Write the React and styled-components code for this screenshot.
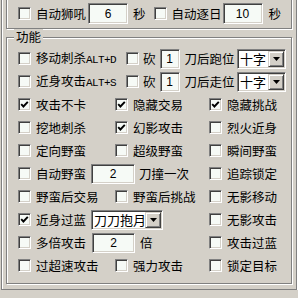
import React from "react";
import styled, { createGlobalStyle } from "styled-components";

const Global = createGlobalStyle`
  html, body {
    margin: 0;
    padding: 0;
    background: #d4d0c8;
    overflow: hidden;
  }
  body {
    font-family: "Noto Sans CJK SC", "DejaVu Sans", sans-serif;
    font-size: 12.5px;
    color: #000;
  }
`;

const Frame = styled.div`
  box-sizing: border-box;
  width: 296px;
  margin: -21px 0 0 1px;
  padding: 0 4px 5px 4px;
  border: 1px solid #808080;
  box-shadow: inset 1px 1px #fff, 1px 1px #fff;
`;

const Group = styled.div`
  position: relative;
  box-sizing: border-box;
  border: 1px solid #808080;
  box-shadow: inset 1px 1px #fff, 1px 1px #fff;
  margin-top: ${(p) => p.$mt || 0}px;
  padding: ${(p) => p.$pad};
`;

const Title = styled.span`
  position: absolute;
  top: -9px;
  left: 7px;
  padding: 0 2px;
  background: #d4d0c8;
  line-height: 16px;
`;

const FlexRow = styled.div`
  display: flex;
  align-items: center;
  height: ${(p) => p.$h || 23}px;
`;

const GridRow = styled.div`
  display: grid;
  grid-template-columns: 97px 94px 1fr;
  align-items: center;
  height: 23px;
`;

const Span2 = styled.div`
  grid-column: span 2;
  display: flex;
  align-items: center;
`;

const Item = styled.label`
  display: flex;
  align-items: center;
  gap: 5px;
  white-space: nowrap;
  flex-shrink: 0;
  width: ${(p) => (p.$w ? `${p.$w}px` : "auto")};
  margin-left: ${(p) => p.$ml || 0}px;
  line-height: 16px;
`;

const Box = styled.span`
  box-sizing: border-box;
  width: 13px;
  height: 13px;
  flex-shrink: 0;
  display: flex;
  align-items: center;
  justify-content: center;
  background: #f6faf6;
  border: 1px solid;
  border-color: #808080 #fff #fff #808080;
  box-shadow: inset 1px 1px #404040, inset -1px -1px #d4d0c8;
`;

const Mono = styled.span`
  font-family: "Liberation Mono", monospace;
  font-size: 11px;
  letter-spacing: -0.6px;
`;

const Text = styled.span`
  flex-shrink: 0;
  white-space: nowrap;
  margin-left: ${(p) => p.$ml || 0}px;
  line-height: 16px;
`;

const Field = styled.div`
  box-sizing: border-box;
  flex-shrink: 0;
  width: ${(p) => p.$w}px;
  height: ${(p) => p.$h || 20}px;
  margin-left: ${(p) => p.$ml || 0}px;
  display: flex;
  align-items: center;
  justify-content: center;
  background: #f6faf6;
  border: 1px solid;
  border-color: #808080 #fff #fff #808080;
  box-shadow: inset 1px 1px #404040, inset -1px -1px #d4d0c8;
  font-family: "Liberation Sans", Arial, sans-serif;
  font-size: 12px;
`;

const SelectBox = styled.div`
  box-sizing: border-box;
  flex-shrink: 0;
  width: ${(p) => p.$w}px;
  height: 20px;
  margin-left: ${(p) => (p.$auto ? "auto" : `${p.$ml || 0}px`)};
  display: flex;
  align-items: stretch;
  padding: 1px;
  background: #fff;
  border: 1px solid;
  border-color: #808080 #fff #fff #808080;
  box-shadow: inset 1px 1px #404040, inset -1px -1px #d4d0c8;
`;

const SelectText = styled.span`
  flex: 1;
  overflow: hidden;
  white-space: nowrap;
  padding-left: 1px;
  line-height: 16px;
  font-size: 13px;
`;

const DropBtn = styled.span`
  box-sizing: border-box;
  width: 16px;
  flex-shrink: 0;
  display: flex;
  align-items: center;
  justify-content: center;
  background: #d4d0c8;
  border: 1px solid;
  border-color: #d4d0c8 #404040 #404040 #d4d0c8;
  box-shadow: inset 1px 1px #fff, inset -1px -1px #808080;
`;

const Check = ({ checked }) => (
  <Box>
    {checked && (
      <svg width="9" height="9" viewBox="0 0 9 9">
        <path d="M1.2 4.2 L3.4 6.5 L7.8 1.8" stroke="#000" strokeWidth="1.9" fill="none" />
      </svg>
    )}
  </Box>
);

const CheckItem = ({ checked, children, w, ml }) => (
  <Item $w={w} $ml={ml}>
    <Check checked={checked} />
    <span>{children}</span>
  </Item>
);

const Select = ({ value, w, ml, auto }) => (
  <SelectBox $w={w} $ml={ml} $auto={auto}>
    <SelectText>{value}</SelectText>
    <DropBtn>
      <svg width="7" height="4" viewBox="0 0 7 4">
        <path d="M0 0 H7 L3.5 4 Z" fill="#000" />
      </svg>
    </DropBtn>
  </SelectBox>
);

const grid = [
  [["攻击不卡", true], ["隐藏交易", true], ["隐藏挑战", true]],
  [["挖地刺杀"], ["幻影攻击", true], ["烈火近身"]],
  [["定向野蛮"], ["超级野蛮"], ["瞬间野蛮"]],
  "auto",
  [["野蛮后交易"], ["野蛮后挑战"], ["无影移动"]],
  "pass",
  "multi",
  [["过超速攻击"], ["强力攻击"], ["锁定目标"]],
];

const Cells = ({ cells }) =>
  cells.map(([t, c]) => <CheckItem key={t} checked={c}>{t}</CheckItem>);

export default function App() {
  return (
    <>
      <Global />
      <Frame>
        <Group $pad="22px 5px 4px 11px">
          <FlexRow $h={21}>
            <CheckItem w={70}>自动狮吼</CheckItem>
            <Field $w={40} $h={21}>6</Field>
            <Text $ml={5}>秒</Text>
            <CheckItem ml={8}>自动逐日</CheckItem>
            <Field $w={40} $h={21} $ml={1}>10</Field>
            <Text $ml={6}>秒</Text>
          </FlexRow>
        </Group>
        <Group $mt={8} $pad="9px 5px 6px 11px">
          <Title>功能</Title>
          <FlexRow>
            <CheckItem w={108}>
              移动刺杀<Mono>ALT+D</Mono>
            </CheckItem>
            <Check />
            <Text $ml={4}>砍</Text>
            <Field $w={20} $ml={4}>1</Field>
            <Text $ml={5}>刀后跑位</Text>
            <Select value="十字" w={49} auto />
          </FlexRow>
          <FlexRow>
            <CheckItem w={108}>
              近身攻击<Mono>ALT+S</Mono>
            </CheckItem>
            <Check />
            <Text $ml={4}>砍</Text>
            <Field $w={20} $ml={4}>1</Field>
            <Text $ml={5}>刀后走位</Text>
            <Select value="十字" w={49} auto />
          </FlexRow>
          {grid.map((row, i) => {
            if (row === "auto")
              return (
                <GridRow key={i}>
                  <Span2>
                    <CheckItem w={73}>自动野蛮</CheckItem>
                    <Field $w={44}>2</Field>
                    <Text $ml={4}>刀撞一次</Text>
                  </Span2>
                  <CheckItem>追踪锁定</CheckItem>
                </GridRow>
              );
            if (row === "pass")
              return (
                <GridRow key={i}>
                  <Span2>
                    <CheckItem w={73} checked>近身过蓝</CheckItem>
                    <Select value="刀刀抱月斩" w={72} />
                  </Span2>
                  <CheckItem>无影攻击</CheckItem>
                </GridRow>
              );
            if (row === "multi")
              return (
                <GridRow key={i}>
                  <Span2>
                    <CheckItem w={74}>多倍攻击</CheckItem>
                    <Field $w={43}>2</Field>
                    <Text $ml={5}>倍</Text>
                  </Span2>
                  <CheckItem>攻击过蓝</CheckItem>
                </GridRow>
              );
            return (
              <GridRow key={i}>
                <Cells cells={row} />
              </GridRow>
            );
          })}
        </Group>
      </Frame>
    </>
  );
}
